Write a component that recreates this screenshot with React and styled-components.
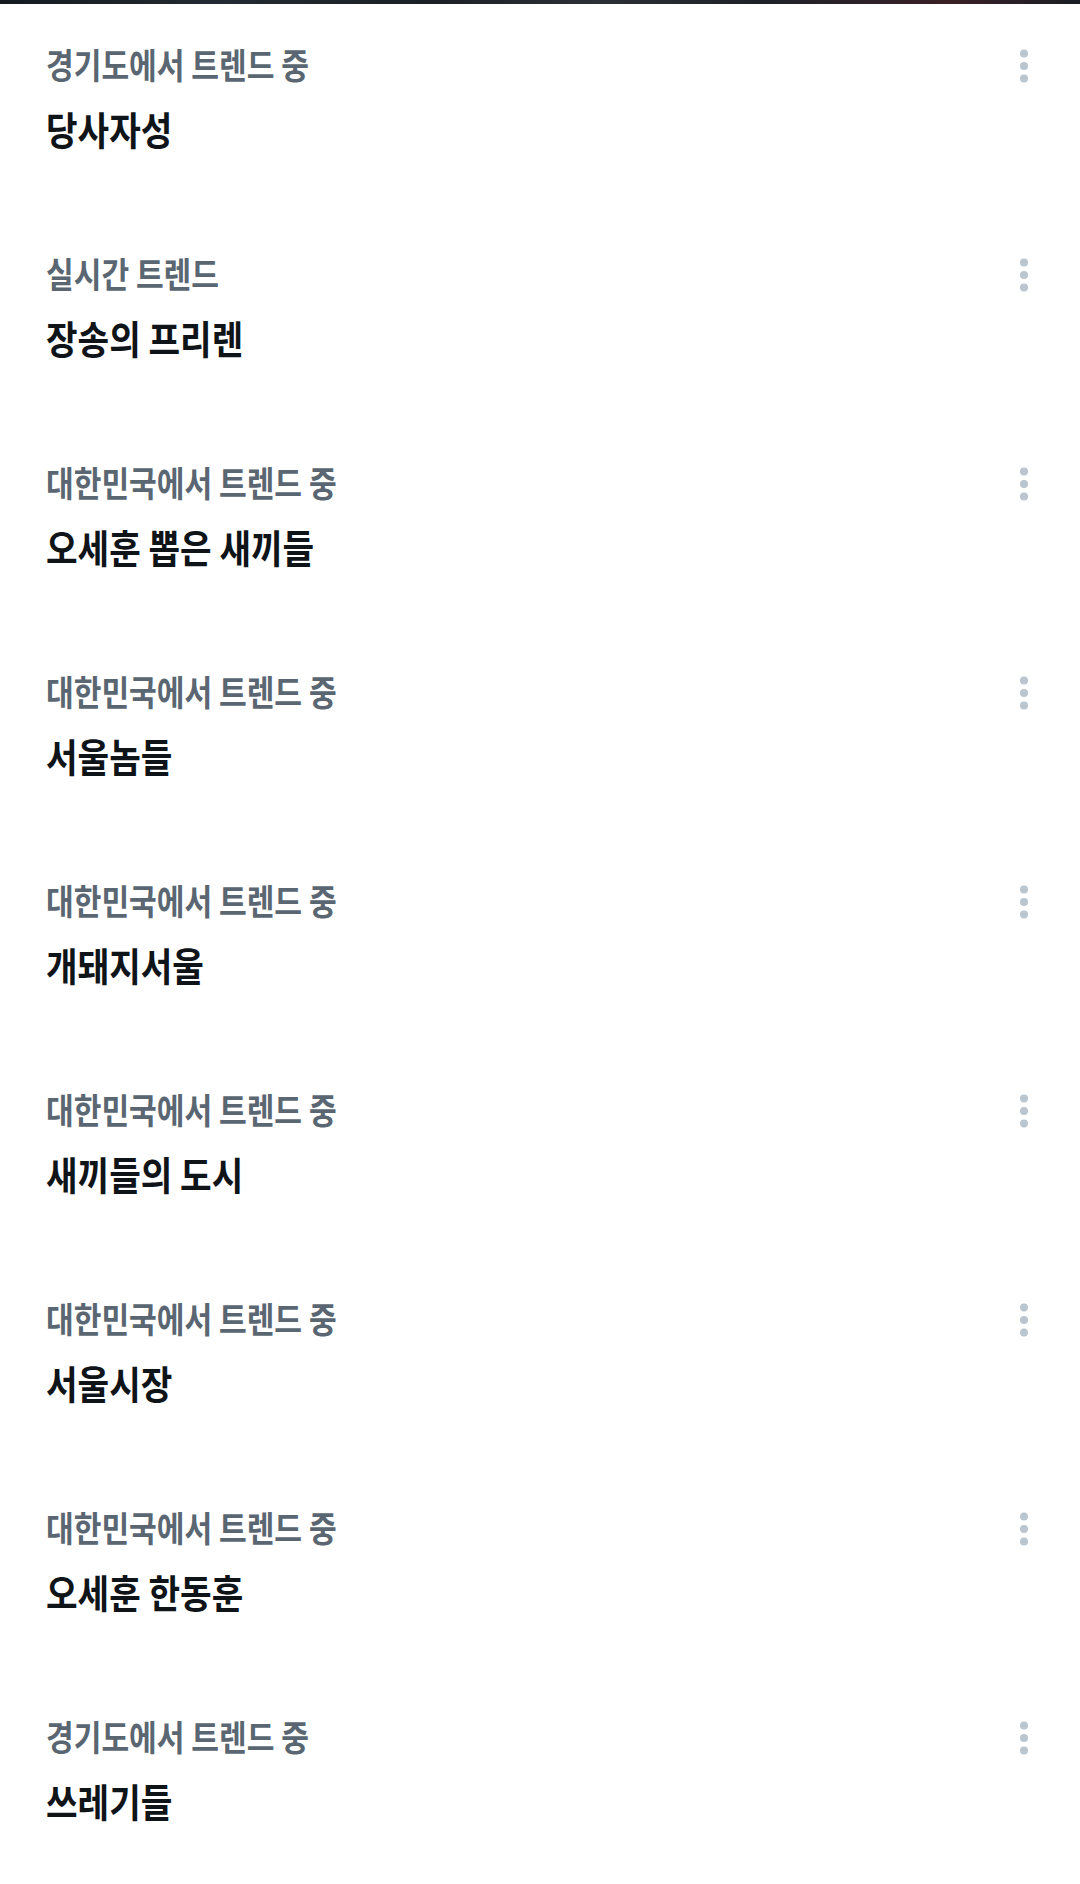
import React from "react";
import styled, { createGlobalStyle } from "styled-components";

const GlobalStyle = createGlobalStyle`
  html, body { margin: 0; padding: 0; background: #ffffff; }
  body { font-family: "Noto Sans CJK KR", "Noto Sans", sans-serif; }
  * { box-sizing: border-box; }
`;

const Page = styled.div`
  width: 1080px;
  background: #ffffff;
  overflow: hidden;
`;

const TopStrip = styled.div`
  height: 4px;
  background: linear-gradient(
    90deg,
    #151a21 0%,
    #222a33 20%,
    #1b2027 40%,
    #2b2f36 55%,
    #1d222a 70%,
    #3a1f26 88%,
    #1a1e25 100%
  );
`;

const List = styled.ul`
  list-style: none;
  margin: 0;
  padding: 0;
`;

const Row = styled.li`
  height: 209px;
  display: flex;
  align-items: flex-start;
  justify-content: space-between;
  padding: 40px 50px 0 46px;
`;

const Texts = styled.div`
  display: flex;
  flex-direction: column;
  gap: 22px;
`;

const Subtitle = styled.span`
  display: inline-block;
  font-size: 35px;
  line-height: 40px;
  font-weight: 700;
  color: #5a6772;
  white-space: nowrap;
  transform: scaleX(0.86);
  transform-origin: left center;
`;

const Title = styled.span`
  display: inline-block;
  font-size: 39px;
  line-height: 44px;
  font-weight: 700;
  color: #0f1419;
  white-space: nowrap;
  transform: scaleX(0.88);
  transform-origin: left center;
`;

const MoreButton = styled.button`
  border: 0;
  background: transparent;
  padding: 0;
  margin-top: 5px;
  width: 12px;
  height: 34px;
  display: flex;
  cursor: pointer;
`;

const MoreIcon = () => (
  <svg width="12" height="34" viewBox="0 0 12 34" aria-hidden="true">
    <circle cx="6" cy="4.5" r="4" fill="#b9c5cf" />
    <circle cx="6" cy="17" r="4" fill="#b9c5cf" />
    <circle cx="6" cy="29.5" r="4" fill="#b9c5cf" />
  </svg>
);

const trends = [
  { sub: "경기도에서 트렌드 중", title: "당사자성" },
  { sub: "실시간 트렌드", title: "장송의 프리렌" },
  { sub: "대한민국에서 트렌드 중", title: "오세훈 뽑은 새끼들" },
  { sub: "대한민국에서 트렌드 중", title: "서울놈들" },
  { sub: "대한민국에서 트렌드 중", title: "개돼지서울" },
  { sub: "대한민국에서 트렌드 중", title: "새끼들의 도시" },
  { sub: "대한민국에서 트렌드 중", title: "서울시장" },
  { sub: "대한민국에서 트렌드 중", title: "오세훈 한동훈" },
  { sub: "경기도에서 트렌드 중", title: "쓰레기들" },
];

export default function App() {
  return (
    <Page>
      <GlobalStyle />
      <TopStrip />
      <List>
        {trends.map((t, i) => (
          <Row key={i}>
            <Texts>
              <Subtitle>{t.sub}</Subtitle>
              <Title>{t.title}</Title>
            </Texts>
            <MoreButton aria-label="더 보기">
              <MoreIcon />
            </MoreButton>
          </Row>
        ))}
      </List>
    </Page>
  );
}
